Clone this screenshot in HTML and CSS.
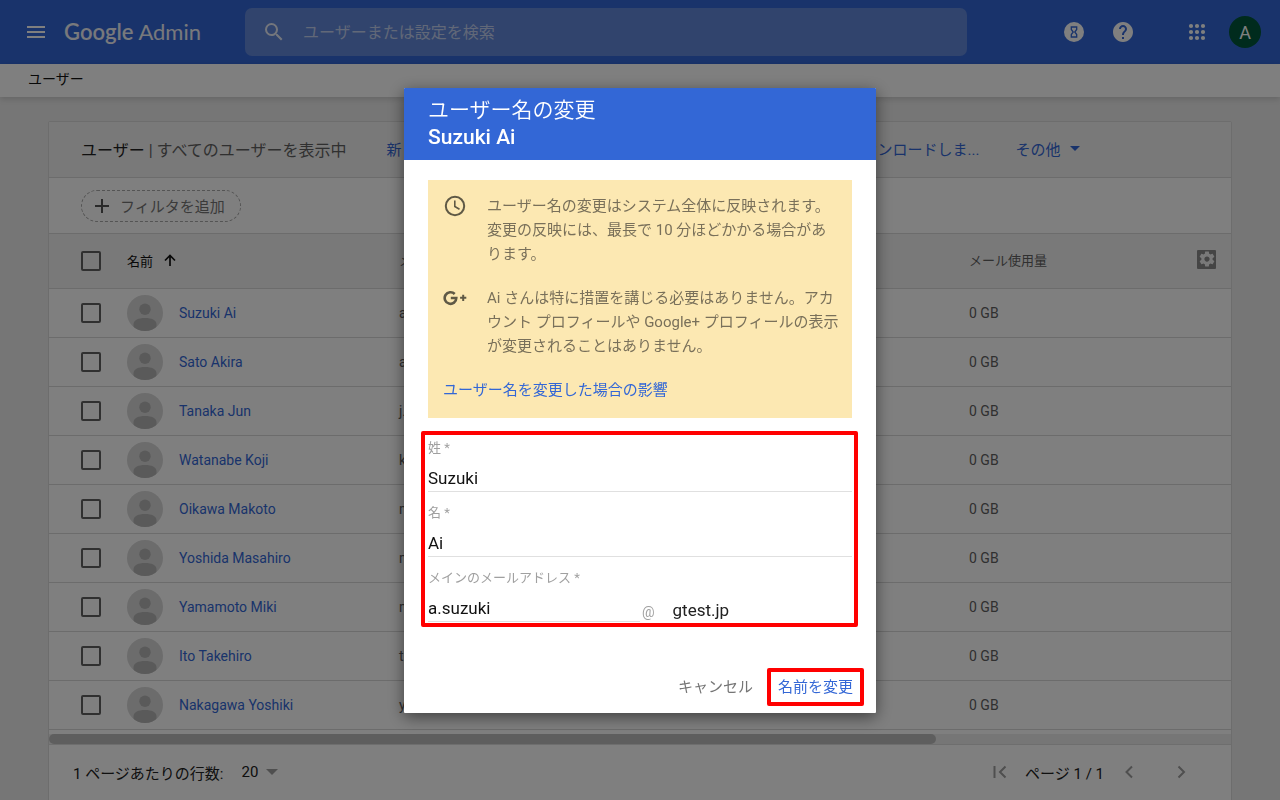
FILE: index.html
```html
<!DOCTYPE html>
<html lang="ja">
<head>
<meta charset="utf-8">
<meta name="viewport" content="width=device-width, initial-scale=1">
<title>Google Admin - ユーザー</title>
<link rel="stylesheet" href="styles.css">
</head>
<body>
<svg class="sprite" aria-hidden="true">
  <symbol id="avatar" viewBox="0 0 36 36">
    <clipPath id="avatar-clip"><circle cx="18" cy="18" r="18"/></clipPath>
    <circle cx="18" cy="18" r="18" fill="#d8d8d8"/>
    <g clip-path="url(#avatar-clip)" fill="#b4b4b4">
      <circle cx="18" cy="14.300" r="5.700"/>
      <path d="M6.500 29.500c0-4.500 5-6.500 11.500-6.500s11.500 2 11.500 6.500V36h-23z"/>
    </g>
  </symbol>
</svg>

<header class="topbar">
  <button class="icon-button" type="button" aria-label="メニュー">
    <svg width="24" height="24" viewBox="0 0 24 24"><path d="M3 18h18v-2H3v2zm0-5h18v-2H3v2zm0-7v2h18V6H3z"/></svg>
  </button>
  <a class="brand" href="#"><span class="brand-name">Google</span> Admin</a>
  <div class="search">
    <svg width="24" height="24" viewBox="0 0 24 24"><path d="M15.5 14h-.79l-.28-.27A6.471 6.471 0 0 0 16 9.500 6.500 6.500 0 1 0 9.500 16c1.610 0 3.090-.59 4.230-1.570l.27.28v.79l5 4.990L20.490 19l-4.990-5zm-6 0C7.010 14 5 11.990 5 9.500S7.010 5 9.500 5 14 7.010 14 9.500 11.990 14 9.500 14z"/></svg>
    <input class="search-input" type="text" placeholder="ユーザーまたは設定を検索" aria-label="検索">
  </div>
  <div class="topbar-actions">
    <button class="icon-button" type="button" aria-label="タスク">
      <svg width="24" height="24" viewBox="0 0 24 24"><circle cx="12" cy="12" r="10"/><path d="M9.300 7h5.400v2.500L12.800 12l1.900 2.500V17H9.300v-2.500l1.900-2.500-1.900-2.500z" fill="none" stroke="#3367d6" stroke-width="1.300"/></svg>
    </button>
    <button class="icon-button" type="button" aria-label="ヘルプ">
      <svg width="24" height="24" viewBox="0 0 24 24"><path d="M12 2C6.480 2 2 6.480 2 12s4.480 10 10 10 10-4.480 10-10S17.520 2 12 2zm1 17h-2v-2h2v2zm2.070-7.750l-.9.92C13.450 12.900 13 13.500 13 15h-2v-.5c0-1.100.45-2.100 1.170-2.830l1.240-1.260c.37-.36.59-.86.59-1.410 0-1.100-.9-2-2-2s-2 .9-2 2H8c0-2.210 1.790-4 4-4s4 1.790 4 4c0 .88-.36 1.680-.93 2.250z"/></svg>
    </button>
    <button class="icon-button apps" type="button" aria-label="アプリ">
      <svg width="24" height="24" viewBox="0 0 24 24"><circle cx="6" cy="6" r="2.100"/><circle cx="12" cy="6" r="2.100"/><circle cx="18" cy="6" r="2.100"/><circle cx="6" cy="12" r="2.100"/><circle cx="12" cy="12" r="2.100"/><circle cx="18" cy="12" r="2.100"/><circle cx="6" cy="18" r="2.100"/><circle cx="12" cy="18" r="2.100"/><circle cx="18" cy="18" r="2.100"/></svg>
    </button>
    <button class="account" type="button">A</button>
  </div>
</header>

<nav class="breadcrumb">ユーザー</nav>

<main class="content">
  <section class="card">
    <div class="toolbar">
      <h1 class="toolbar-title">ユーザー <span class="toolbar-sub">| すべてのユーザーを表示中</span></h1>
      <a class="action" href="#">新しいユーザーの追加</a>
      <a class="action" href="#">ユーザー情報の一括更新</a>
      <a class="action" href="#">ユーザーをダウンロードしま...</a>
      <button class="action action-more" type="button">その他
        <svg width="10" height="5" viewBox="0 0 10 5"><path d="M0 0h10L5 5z"/></svg>
      </button>
    </div>
    <div class="filters">
      <button class="filter-chip" type="button">
        <svg width="16" height="16" viewBox="0 0 16 16"><path d="M8 1v14M1 8h14" stroke="currentColor" stroke-width="2"/></svg>
        フィルタを追加
      </button>
    </div>
    <table class="users">
      <colgroup><col class="col-check"><col class="col-name"><col><col class="col-usage"><col class="col-gear"></colgroup>
      <thead>
        <tr>
          <th class="check-cell"><input class="check" type="checkbox" aria-label="すべて選択"></th>
          <th class="sorted"><span class="sort-label">名前
            <svg width="12" height="12" viewBox="0 0 12 12"><path d="M6 12V1.500M1 6.500l5-5 5 5" fill="none" stroke="currentColor" stroke-width="1.700"/></svg></span></th>
          <th class="head-text">メールアドレス</th>
          <th class="head-text">メール使用量</th>
          <th class="head-text"><button class="gear" type="button" aria-label="列の管理"><svg width="18" height="18" viewBox="0 0 24 24"><path d="M19.430 12.980c.04-.32.07-.64.07-.98s-.03-.66-.07-.98l2.110-1.650c.19-.15.24-.42.12-.64l-2-3.460c-.12-.22-.39-.3-.61-.22l-2.490 1c-.52-.4-1.080-.73-1.690-.98l-.38-2.650C14.460 2.180 14.250 2 14 2h-4c-.25 0-.46.18-.49.42l-.38 2.650c-.61.25-1.170.59-1.690.98l-2.490-1c-.23-.09-.49 0-.61.22l-2 3.460c-.13.22-.07.49.12.64l2.110 1.650c-.04.32-.07.65-.07.98s.03.66.07.98l-2.110 1.650c-.19.15-.24.42-.12.64l2 3.460c.12.22.39.3.61.22l2.490-1c.52.4 1.080.73 1.690.98l.38 2.650c.03.24.24.42.49.42h4c.25 0 .46-.18.49-.42l.38-2.650c.61-.25 1.170-.59 1.690-.98l2.490 1c.23.09.49 0 .61-.22l2-3.460c.12-.22.07-.49-.12-.64l-2.110-1.650zM12 15.500c-1.930 0-3.500-1.570-3.500-3.500s1.570-3.500 3.500-3.500 3.500 1.570 3.500 3.500-1.570 3.500-3.500 3.500z"/></svg></button></th>
        </tr>
      </thead>
      <tbody>
        <tr><td class="check-cell"><input class="check" type="checkbox" aria-label="Suzuki Ai"></td><td><a class="user" href="#"><svg width="36" height="36"><use href="#avatar"/></svg>Suzuki Ai</a></td><td>a.suzuki@gtest.jp</td><td>0 GB</td><td></td></tr>
        <tr><td class="check-cell"><input class="check" type="checkbox" aria-label="Sato Akira"></td><td><a class="user" href="#"><svg width="36" height="36"><use href="#avatar"/></svg>Sato Akira</a></td><td>a.sato@gtest.jp</td><td>0 GB</td><td></td></tr>
        <tr><td class="check-cell"><input class="check" type="checkbox" aria-label="Tanaka Jun"></td><td><a class="user" href="#"><svg width="36" height="36"><use href="#avatar"/></svg>Tanaka Jun</a></td><td>j.tanaka@gtest.jp</td><td>0 GB</td><td></td></tr>
        <tr><td class="check-cell"><input class="check" type="checkbox" aria-label="Watanabe Koji"></td><td><a class="user" href="#"><svg width="36" height="36"><use href="#avatar"/></svg>Watanabe Koji</a></td><td>k.watanabe@gtest.jp</td><td>0 GB</td><td></td></tr>
        <tr><td class="check-cell"><input class="check" type="checkbox" aria-label="Oikawa Makoto"></td><td><a class="user" href="#"><svg width="36" height="36"><use href="#avatar"/></svg>Oikawa Makoto</a></td><td>m.oikawa@gtest.jp</td><td>0 GB</td><td></td></tr>
        <tr><td class="check-cell"><input class="check" type="checkbox" aria-label="Yoshida Masahiro"></td><td><a class="user" href="#"><svg width="36" height="36"><use href="#avatar"/></svg>Yoshida Masahiro</a></td><td>m.yoshida@gtest.jp</td><td>0 GB</td><td></td></tr>
        <tr><td class="check-cell"><input class="check" type="checkbox" aria-label="Yamamoto Miki"></td><td><a class="user" href="#"><svg width="36" height="36"><use href="#avatar"/></svg>Yamamoto Miki</a></td><td>m.yamamoto@gtest.jp</td><td>0 GB</td><td></td></tr>
        <tr><td class="check-cell"><input class="check" type="checkbox" aria-label="Ito Takehiro"></td><td><a class="user" href="#"><svg width="36" height="36"><use href="#avatar"/></svg>Ito Takehiro</a></td><td>t.ito@gtest.jp</td><td>0 GB</td><td></td></tr>
        <tr><td class="check-cell"><input class="check" type="checkbox" aria-label="Nakagawa Yoshiki"></td><td><a class="user" href="#"><svg width="36" height="36"><use href="#avatar"/></svg>Nakagawa Yoshiki</a></td><td>y.nakagawa@gtest.jp</td><td>0 GB</td><td></td></tr>
      </tbody>
    </table>
    <div class="scroll-track"><div class="scroll-thumb"></div></div>
    <footer class="pager">
      <label class="rows-label" for="rows">1 ページあたりの行数:</label>
      <div class="rows-field">
        <select class="rows" id="rows"><option>20</option></select>
        <svg width="12" height="6" viewBox="0 0 12 6"><path d="M0 0h12L6 6z"/></svg>
      </div>
      <div class="pages">
        <button class="page-button" type="button" aria-label="最初のページ"><svg width="14" height="14" viewBox="0 0 14 14"><path d="M1.500 1v12M12.500 1.500L7 7l5.500 5.500"/></svg></button>
        <span class="page-text">ページ 1 / 1</span>
        <button class="page-button" type="button" aria-label="前のページ"><svg width="14" height="14" viewBox="0 0 14 14"><path d="M10 1.500L4.500 7l5.500 5.500"/></svg></button>
        <button class="page-button page-next" type="button" aria-label="次のページ"><svg width="14" height="14" viewBox="0 0 14 14"><path d="M4.500 1.500L10 7l-5.500 5.500"/></svg></button>
      </div>
    </footer>
  </section>
</main>

<div class="scrim">
  <form class="dialog" role="dialog" aria-labelledby="dialog-title">
    <header class="dialog-head" id="dialog-title">
      <div class="dialog-title">ユーザー名の変更</div>
      <div class="dialog-user">Suzuki Ai</div>
    </header>
    <div class="dialog-body">
      <div class="notice">
        <div class="notice-item">
          <svg class="notice-icon" width="24" height="24" viewBox="0 0 24 24"><g fill="none" stroke="currentColor" stroke-width="2"><circle cx="12" cy="12" r="9.200"/><path d="M11.800 6.500v6l4.700 2.800" stroke-width="1.600"/></g></svg>
          <p class="notice-text">ユーザー名の変更はシステム全体に反映されます。変更の反映には、最長で 10 分ほどかかる場合があります。</p>
        </div>
        <div class="notice-item">
          <svg class="notice-icon" width="24" height="24" viewBox="0 0 24 24"><g fill="none" stroke="currentColor" stroke-width="2.600"><path d="M11.700 8A5.800 5.800 0 1 0 13.300 12H7.800"/><path d="M20.200 8.700v6.200M17.100 11.800h6.200" stroke-width="2"/></g></svg>
          <p class="notice-text">Ai さんは特に措置を講じる必要はありません。アカウント プロフィールや Google+ プロフィールの表示が変更されることはありません。</p>
        </div>
        <a class="notice-link" href="#">ユーザー名を変更した場合の影響</a>
      </div>
      <div class="fields">
        <div class="field">
          <label class="field-label" for="last">姓 *</label>
          <input class="field-input" id="last" type="text" value="Suzuki">
        </div>
        <div class="field">
          <label class="field-label" for="first">名 *</label>
          <input class="field-input" id="first" type="text" value="Ai">
        </div>
        <div class="field">
          <label class="field-label" for="mail">メインのメールアドレス *</label>
          <div class="mail-row">
            <input class="field-input" id="mail" type="text" value="a.suzuki">
            <span class="at">@</span>
            <span class="domain">gtest.jp</span>
          </div>
        </div>
      </div>
    </div>
    <div class="dialog-actions">
      <button class="cancel" type="button">キャンセル</button>
      <button class="confirm" type="submit">名前を変更</button>
    </div>
  </form>
</div>
</body>
</html>
```

FILE: styles.css
```css
* {
  box-sizing: border-box;
}

body {
  margin: 0;
  height: 100vh;
  overflow: hidden;
  background: #ececec;
  color: #212121;
  font-family: Roboto, "Noto Sans CJK JP", sans-serif;
  font-size: 14px;
}

button,
input,
select {
  margin: 0;
  padding: 0;
  border: 0;
  background: none;
  color: inherit;
  font: inherit;
}

a {
  color: #3367d6;
  text-decoration: none;
}

svg {
  display: block;
  flex: none;
}

.sprite {
  position: absolute;
  width: 0;
  height: 0;
}

/* Top bar */
.topbar {
  display: flex;
  align-items: center;
  height: 64px;
  padding: 0 19px 0 24px;
  background: #3367d6;
  color: #fff;
  fill: #fff;
}

.brand {
  flex: none;
  width: 141px;
  margin-left: 16px;
  color: #f0f2f8;
  font-family: Lato, sans-serif;
  font-size: 22px;
  line-height: 28px;
  white-space: nowrap;
}

.brand-name {
  font-weight: 600;
}

.search {
  display: flex;
  flex: 0 1 722px;
  align-items: center;
  gap: 17px;
  height: 48px;
  margin-left: 40px;
  padding: 0 17px;
  border-radius: 7px;
  background: #6388da;
}

.search svg {
  opacity: 0.85;
}

.search-input {
  flex: 1;
  min-width: 0;
  font-size: 16px;
}

.search-input::placeholder {
  color: #c2d0f0;
  opacity: 1;
}

.topbar-actions {
  display: flex;
  align-items: center;
  gap: 25px;
  margin-left: auto;
}

.apps {
  margin: 0 -5px 0 25px;
}

.account {
  width: 32px;
  height: 32px;
  border-radius: 50%;
  background: #00573a;
  font-size: 18px;
}

.breadcrumb {
  height: 33px;
  padding-left: 28px;
  background: #fff;
  box-shadow: 0 2px 6px rgba(0, 0, 0, 0.15);
  color: #111;
  line-height: 30px;
}

/* User list */
.content {
  padding: 24px 48px 0;
}

.card {
  border: 1px solid #dadada;
  border-radius: 2px;
  background: #fff;
}

.toolbar {
  display: flex;
  align-items: center;
  gap: 36px;
  height: 56px;
  padding: 0 32px 2px;
  border-bottom: 1px solid #d8d8d8;
  background: #f3f3f3;
  white-space: nowrap;
}

.toolbar-title {
  margin: 0 4px 0 0;
  font-size: 16px;
  font-weight: 400;
}

.toolbar-sub {
  color: #616161;
}

.action {
  color: #3367d6;
  font-size: 15px;
}

.action-more {
  display: flex;
  align-items: center;
  gap: 10px;
  fill: #3367d6;
}

.filters {
  display: flex;
  align-items: center;
  height: 56px;
  padding: 0 32px;
  border-bottom: 1px solid #d8d8d8;
}

.filter-chip {
  display: flex;
  align-items: center;
  gap: 10px;
  height: 32px;
  padding: 0 15px 0 12px;
  border: 1px dashed #a8a8a8;
  border-radius: 16px;
  color: #757575;
  font-size: 15px;
}

.filter-chip svg {
  color: #555;
}

.users {
  width: 100%;
  border-spacing: 0;
  table-layout: fixed;
  color: #616161;
}

.users th {
  height: 55px;
  padding: 0;
  border-bottom: 1px solid #d8d8d8;
  background: #f3f3f3;
  font-size: 13px;
  font-weight: 400;
  text-align: left;
}

.users .head-text {
  padding-bottom: 4px;
}

.users td {
  height: 49px;
  padding: 0;
  border-bottom: 1px solid #d8d8d8;
}

.users .sorted {
  padding-bottom: 2px;
  color: #111;
}

.users .check-cell {
  padding-left: 32px;
}

.col-check {
  width: 78px;
}

.col-name {
  width: 272px;
}

.col-usage {
  width: 228px;
}

.col-gear {
  width: 34px;
}

.check {
  display: block;
  width: 20px;
  height: 20px;
  border: 2px solid #616161;
  border-radius: 2px;
  appearance: none;
}

.sort-label {
  display: flex;
  align-items: center;
  gap: 11px;
}

.user {
  display: flex;
  align-items: center;
  gap: 16px;
}

.gear {
  display: flex;
  align-items: center;
  justify-content: center;
  width: 19px;
  height: 19px;
  border-radius: 1px;
  background: #8a8a8a;
  fill: #f3f3f3;
}

.scroll-track {
  padding-right: 25%;
  border-top: 4px solid #fff;
  border-bottom: 1px solid #dcdcdc;
  background: #ececec;
}

.scroll-thumb {
  height: 10px;
  border-radius: 5px;
  background: #bdbdbd;
}

.pager {
  display: flex;
  align-items: center;
  height: 56px;
  padding: 0 43px 2px 24px;
  font-size: 15px;
}

.rows-field {
  display: flex;
  align-items: center;
  gap: 7px;
  margin-left: 18px;
  fill: #9e9e9e;
}

.rows {
  appearance: none;
}

.pages {
  display: flex;
  align-items: center;
  gap: 18px;
  margin-left: auto;
}

.page-button {
  fill: none;
  stroke: #9e9e9e;
  stroke-width: 2;
}

.page-next {
  margin-left: 20px;
}

/* Dialog */
.scrim {
  position: fixed;
  inset: 0;
  display: flex;
  align-items: center;
  justify-content: center;
  background: rgba(0, 0, 0, 0.5);
}

.dialog {
  width: 472px;
  max-width: 100%;
  border-radius: 1px;
  background: #fff;
  box-shadow: 0 4px 16px rgba(0, 0, 0, 0.5);
  overflow: hidden;
}

.dialog-head {
  padding: 9px 24px;
  background: #3367d6;
  color: #fff;
  font-size: 21px;
  line-height: 27px;
}

.dialog-title {
  font-weight: 350;
}

.dialog-user {
  font-weight: 500;
}

.dialog-body {
  padding: 20px 24px 0;
}

.notice {
  display: flex;
  flex-direction: column;
  gap: 20px;
  padding: 14px 13px 16px 15px;
  background: #fce8b2;
  color: #79705a;
  font-size: 15px;
  line-height: 24px;
}

.notice-item {
  display: flex;
  gap: 20px;
}

.notice-icon {
  color: #5f5945;
}

.notice-text {
  flex: 1;
  margin: 0;
}

.fields {
  display: flex;
  flex-direction: column;
  gap: 8px;
  margin: 13px -6px 0 -7px;
  padding: 0 2px 1px 3px;
  border: 4px solid #f00;
  border-radius: 2px;
}

.field {
  display: flex;
  flex-direction: column;
  gap: 4px;
}

.field-label {
  color: #a0a0a0;
  font-size: 13px;
  line-height: 26px;
}

.field-input {
  width: 100%;
  height: 27px;
  border-bottom: 1px solid #e0e0e0;
  color: #111;
  font-size: 17px;
}

.mail-row {
  display: flex;
  align-items: center;
}

.mail-row .field-input {
  width: 50%;
}

.at {
  margin: 8px 18px 0 2px;
  color: #a0a0a0;
}

.domain {
  margin-top: 4px;
  color: #212121;
  font-size: 17px;
  line-height: 20px;
}

.dialog-actions {
  display: flex;
  justify-content: flex-end;
  gap: 14px;
  padding: 41px 12px 7px;
  font-size: 15px;
}

.cancel {
  padding-bottom: 2px;
  color: #757575;
}

.confirm {
  height: 38px;
  padding: 0 7px 2px;
  border: 4px solid #f00;
  border-radius: 2px;
  color: #3367d6;
}
```
